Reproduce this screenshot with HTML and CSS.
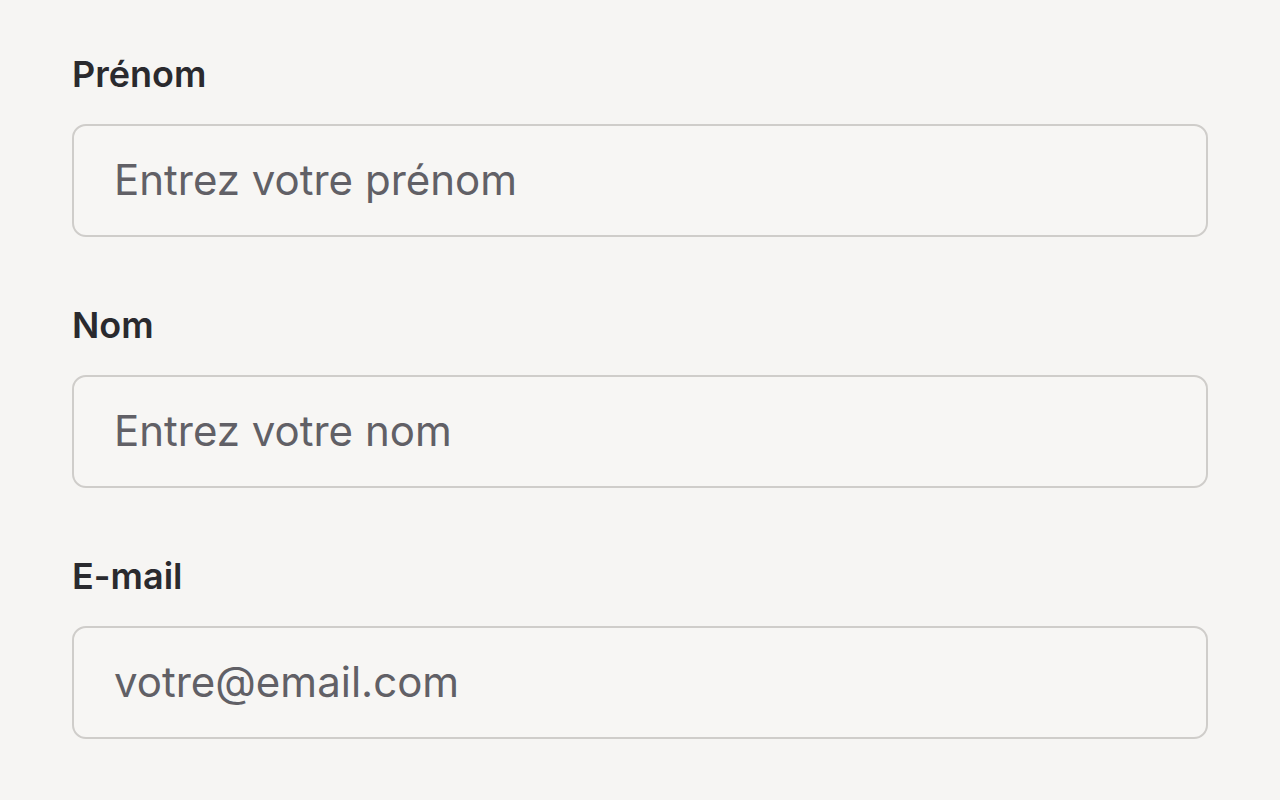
FILE: index.html
```html
<!DOCTYPE html>
<html lang="fr">
<head>
    <meta charset="UTF-8">
    <meta name="viewport" content="width=device-width, initial-scale=1.0">
    <title>Inscription</title>
    <link rel="stylesheet" href="styles.css">
</head>
<body>
    <form class="signup-form">
        <div class="form-group">
            <label for="prenom">Prénom</label>
            <input type="text" id="prenom" placeholder="Entrez votre prénom">
        </div>
        <div class="form-group">
            <label for="nom">Nom</label>
            <input type="text" id="nom" placeholder="Entrez votre nom">
        </div>
        <div class="form-group">
            <label for="email">E-mail</label>
            <input type="email" id="email" placeholder="votre@email.com">
        </div>
    </form>
</body>
</html>
```

FILE: styles.css
```css
body {
    font-family: Inter, "Noto Sans", Arial, sans-serif;
    margin: 0;
    padding: 0;
    background: #f6f5f3;
    color: #27272a;
}
.signup-form {
    display: flex;
    flex-direction: column;
    gap: 61px;
    padding: 47px 72px;
}
.form-group {
    display: flex;
    flex-direction: column;
}
label {
    font-size: 36px;
    line-height: 54px;
    font-weight: 600;
    margin-bottom: 23px;
    color: #2a2a2e;
}
input {
    box-sizing: border-box;
    width: 100%;
    height: 113px;
    padding: 0 40px 2px;
    font-family: inherit;
    font-size: 42px;
    color: #27272a;
    background: #f7f6f4;
    border: 2px solid #cfcdca;
    border-radius: 14px;
    outline: none;
}
input::placeholder {
    color: #616066;
    opacity: 1;
}
```
